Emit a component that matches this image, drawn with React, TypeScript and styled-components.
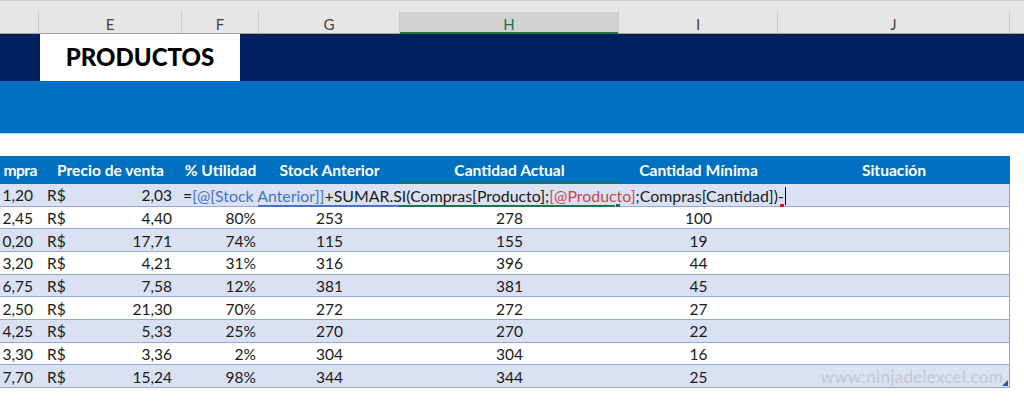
import React from 'react';
import styled, {createGlobalStyle} from 'styled-components';

const FONT = `Lato, "Liberation Sans", sans-serif`;
const COLUMNS = '39px 143px 77px 141px 219px 159px 232px 1fr';
const LETTERS = ['', 'E', 'F', 'G', 'H', 'I', 'J', ''];
const SELECTED_LETTER = 'H';
const TITLE_TEXT = 'PRODUCTOS';
const WATERMARK_TEXT = 'www;ninjadelexcel.com';

// first column is scrolled off to the left, only its tail shows
const HEADERS = ['mpra', 'Precio de venta', '% Utilidad', 'Stock Anterior', 'Cantidad Actual', 'Cantidad Mínima', 'Situación'];

interface Product {
  compra: string;
  venta: string;
  utilidad: string;
  anterior: string;
  actual: string;
  minima: string;
}

const PRODUCTS: Product[] = [
  {compra: '1,20', venta: '2,03', utilidad: '', anterior: '', actual: '', minima: ''},
  {compra: '2,45', venta: '4,40', utilidad: '80%', anterior: '253', actual: '278', minima: '100'},
  {compra: '0,20', venta: '17,71', utilidad: '74%', anterior: '115', actual: '155', minima: '19'},
  {compra: '3,20', venta: '4,21', utilidad: '31%', anterior: '316', actual: '396', minima: '44'},
  {compra: '6,75', venta: '7,58', utilidad: '12%', anterior: '381', actual: '381', minima: '45'},
  {compra: '2,50', venta: '21,30', utilidad: '70%', anterior: '272', actual: '272', minima: '27'},
  {compra: '4,25', venta: '5,33', utilidad: '25%', anterior: '270', actual: '270', minima: '22'},
  {compra: '3,30', venta: '3,36', utilidad: '2%', anterior: '304', actual: '304', minima: '16'},
  {compra: '7,70', venta: '15,24', utilidad: '98%', anterior: '344', actual: '344', minima: '25'},
];

const GlobalStyle = createGlobalStyle`
  html, body {
    margin: 0;
    padding: 0;
    background: #FFFFFF;
    overflow: hidden;
  }
  * {
    box-sizing: border-box;
  }
`;

const Page = styled.div`
  width: 1024px;
  height: 413px;
  display: flex;
  flex-direction: column;
  font-family: ${FONT};
  color: #1A1A1A;
  background: #FFFFFF;
`;

const ColumnBar = styled.div`
  height: 34px;
  background: #E6E6E6;
  border-top: 1px solid #CDCDCD;
  display: flex;
  flex-direction: column;
  justify-content: flex-end;
`;

const LetterRow = styled.div`
  height: 22px;
  display: grid;
  grid-template-columns: ${COLUMNS};
  border-bottom: 1px solid #A3A3A3;
`;

const Letter = styled.div<{$selected: boolean; $edge: boolean}>`
  display: flex;
  align-items: center;
  justify-content: center;
  padding-top: 2px;
  font-size: 15px;
  color: ${p => (p.$selected ? '#217346' : '#444444')};
  background: ${p => (p.$selected ? '#D2D2D2' : 'transparent')};
  border-right: ${p => (p.$edge ? 'none' : '1px solid #C8C8C8')};
  box-shadow: ${p => (p.$selected ? 'inset 0 -2px 0 #217346' : 'none')};
  margin-bottom: ${p => (p.$selected ? '-1px' : '0')};
`;

const Banner = styled.div`
  height: 47px;
  background: #002060;
  display: flex;
  padding-left: 40px;
`;

const TitleBox = styled.div`
  width: 200px;
  background: #FFFFFF;
  display: flex;
  align-items: center;
  justify-content: center;
  font-size: 24px;
  font-weight: 900;
  color: #000000;
  padding-bottom: 2px;
`;

const Band = styled.div`
  height: 53px;
  background: #0070C0;
  border-bottom: 1px solid #BDD7EE;
`;

const Spacer = styled.div`
  height: 22px;
`;

const Table = styled.div`
  display: grid;
  grid-template-columns: 39px 143px 77px 141px 219px 159px 232px;
  width: 1010px;
`;

const HeadCell = styled.div<{$align: 'center' | 'end'}>`
  height: 28px;
  background: #0070C0;
  color: #FFFFFF;
  font-weight: bold;
  font-size: 15.6px;
  display: flex;
  align-items: center;
  justify-content: ${p => (p.$align === 'end' ? 'flex-end' : 'center')};
  padding-right: ${p => (p.$align === 'end' ? '2px' : '0')};
  letter-spacing: ${p => (p.$align === 'end' ? '-0.5px' : 'normal')};
  white-space: nowrap;
`;

const Cell = styled.div<{$odd: boolean; $align: 'start' | 'center' | 'end' | 'between'; $last?: boolean}>`
  height: 22.67px;
  background: ${p => (p.$odd ? '#D9E1F2' : '#FFFFFF')};
  border-bottom: 1px solid #8EA9DB;
  border-right: ${p => (p.$last ? '1px solid #8EA9DB' : 'none')};
  display: flex;
  align-items: center;
  justify-content: ${p =>
    p.$align === 'between' ? 'space-between' : p.$align === 'start' ? 'flex-start' : p.$align === 'end' ? 'flex-end' : 'center'};
  font-size: 15.5px;
  white-space: nowrap;
  position: relative;
  padding-top: 1px;
`;

const Compra = styled(Cell)`
  padding-right: 6px;
`;

const Money = styled(Cell)`
  padding-left: 8px;
  padding-right: 10px;
`;

const Percent = styled(Cell)`
  padding-right: 3px;
`;

const FormulaCell = styled(Cell)`
  grid-column: span 5;
  padding-left: 1px;
`;

const FormulaText = styled.span`
  font-size: 15.9px;
  color: #1A1A1A;
  position: relative;
  z-index: 1;
`;

const Ref = styled.span<{$tone: 'blue' | 'red'}>`
  color: ${p => (p.$tone === 'blue' ? '#4A72C8' : '#C9474F')};
`;

const Caret = styled.span`
  display: inline-block;
  width: 1px;
  height: 18px;
  background: #000000;
  margin-left: 1px;
  vertical-align: -3px;
`;

/* reference highlights drawn by Excel over the edited row */
const RefLine = styled.div<{$left: number; $width: number; $color: string; $top?: boolean}>`
  position: absolute;
  left: ${p => p.$left}px;
  width: ${p => p.$width}px;
  height: 2px;
  background: ${p => p.$color};
  ${p => (p.$top ? 'top: -2px;' : 'bottom: -1px;')}
`;

const Handle = styled.div<{$left: number; $color: string}>`
  position: absolute;
  left: ${p => p.$left}px;
  bottom: -2px;
  width: 4px;
  height: 4px;
  background: ${p => p.$color};
`;

const Watermark = styled.span`
  font-size: 17px;
  color: #C6C9D0;
  padding-right: 6px;
  letter-spacing: 0.3px;
`;

const Corner = styled.div`
  position: absolute;
  right: 1px;
  bottom: 1px;
  width: 0;
  height: 0;
  border-left: 6px solid transparent;
  border-bottom: 6px solid #2F4FB0;
`;

const FormulaRow = ({product}: {product: Product}) => (
  <>
    <Compra $odd $align="end">{product.compra}</Compra>
    <Money $odd $align="between">
      <span>R$</span>
      <span>{product.venta}</span>
    </Money>
    <FormulaCell $odd $align="start" $last>
      <RefLine $left={76} $width={142} $color="#4A72C8" />
      <RefLine $left={217} $width={219} $color="#217346" $top />
      <RefLine $left={217} $width={216} $color="#217346" />
      <Handle $left={434} $color="#217346" />
      <Handle $left={598} $color="#E81123" />
      <FormulaText>
        =<Ref $tone="blue">[@[Stock Anterior]]</Ref>+SUMAR.SI(Compras[Producto];<Ref $tone="red">[@Producto]</Ref>;Compras[Cantidad])-
        <Caret />
      </FormulaText>
    </FormulaCell>
  </>
);

const DataRow = ({product, odd, last}: {product: Product; odd: boolean; last: boolean}) => (
  <>
    <Compra $odd={odd} $align="end">{product.compra}</Compra>
    <Money $odd={odd} $align="between">
      <span>R$</span>
      <span>{product.venta}</span>
    </Money>
    <Percent $odd={odd} $align="end">{product.utilidad}</Percent>
    <Cell $odd={odd} $align="center">{product.anterior}</Cell>
    <Cell $odd={odd} $align="center">{product.actual}</Cell>
    <Cell $odd={odd} $align="center">{product.minima}</Cell>
    <Cell $odd={odd} $align="end" $last>
      {last && <Watermark>{WATERMARK_TEXT}</Watermark>}
      {last && <Corner />}
    </Cell>
  </>
);

const App = () => {
  return (
    <Page>
      <GlobalStyle />
      <ColumnBar>
        <LetterRow>
          {LETTERS.map((letter, i) => (
            <Letter key={i} $selected={letter === SELECTED_LETTER} $edge={i === LETTERS.length - 1}>
              {letter}
            </Letter>
          ))}
        </LetterRow>
      </ColumnBar>
      <Banner>
        <TitleBox>{TITLE_TEXT}</TitleBox>
      </Banner>
      <Band />
      <Spacer />
      <Table>
        {HEADERS.map((title, i) => (
          <HeadCell key={title} $align={i === 0 ? 'end' : 'center'}>{title}</HeadCell>
        ))}
        {PRODUCTS.map((product, i) =>
          i === 0 ? (
            <FormulaRow key={i} product={product} />
          ) : (
            <DataRow key={i} product={product} odd={i % 2 === 0} last={i === PRODUCTS.length - 1} />
          )
        )}
      </Table>
    </Page>
  );
};

export default App;
